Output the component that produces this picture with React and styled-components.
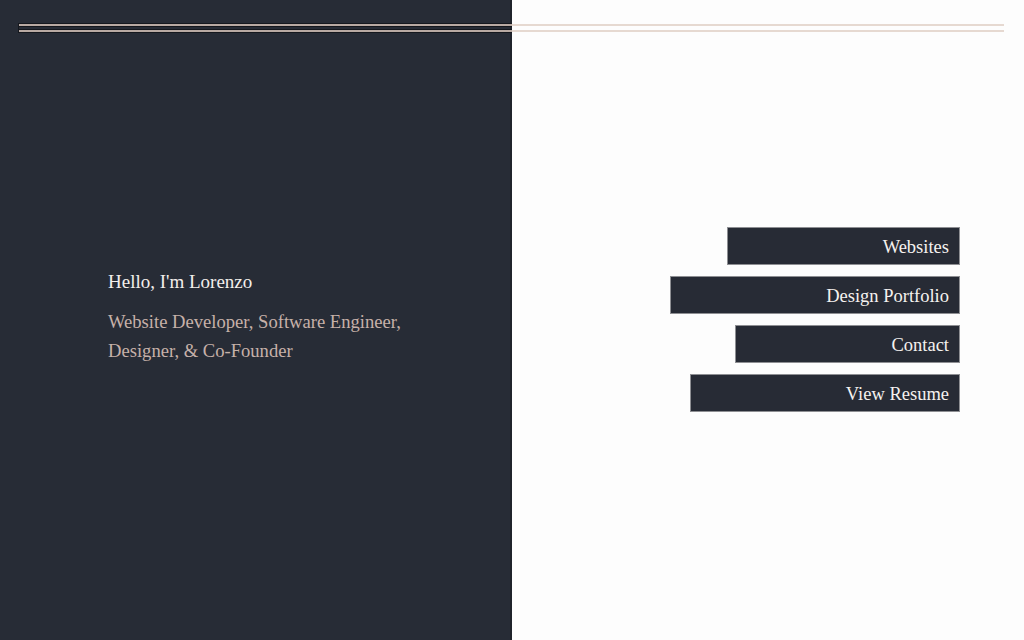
import React from 'react';
import styled, { createGlobalStyle } from 'styled-components';

const GlobalStyle = createGlobalStyle`
  html, body {
    margin: 0;
    padding: 0;
    height: 100%;
  }
  body {
    font-family: "Liberation Serif", "DejaVu Serif", serif;
    background: #fdfdfd;
  }
  #root {
    height: 100%;
  }
`;

function App() {
    const links = ['Websites', 'Design Portfolio', 'Contact', 'View Resume'];

    return (
        <>
            <GlobalStyle />
            <Page>
                <Intro>
                    <Rule side="left" />
                    <IntroBody>
                        <Greeting>Hello, I'm Lorenzo</Greeting>
                        <Roles>
                            Website Developer, Software Engineer,
                            <br />
                            Designer, &amp; Co-Founder
                        </Roles>
                    </IntroBody>
                </Intro>
                <Menu>
                    <Rule side="right" />
                    <MenuBody>
                        {links.map(label => (
                            <MenuButton key={label} href="#">{label}</MenuButton>
                        ))}
                    </MenuBody>
                </Menu>
            </Page>
        </>
    );
}

const Page = styled.div`
  display: grid;
  grid-template-columns: 512px 1fr;
  height: 640px;
  overflow: hidden;
`;

const Intro = styled.section`
  display: flex;
  flex-direction: column;
  background-color: #272c36;
  border-right: 2px solid #1f232b;
  box-sizing: border-box;
  padding-top: 24px;
`;

const Menu = styled.section`
  display: flex;
  flex-direction: column;
  background-color: #fdfdfd;
  padding-top: 24px;
`;

const Rule = styled.div`
  height: 4px;
  border-top: 2px solid ${props => props.side === 'left' ? '#b9aaa3' : '#e6d9d1'};
  border-bottom: 2px solid ${props => props.side === 'left' ? '#b9aaa3' : '#e6d9d1'};
  margin: ${props => props.side === 'left' ? '0 -2px 0 19px' : '0 20px 0 0'};
  box-shadow: ${props => props.side === 'left' ? '0 0 0 1px #15181e, inset 0 1px 0 #15181e, inset 0 -1px 0 #15181e' : 'none'};
  flex-shrink: 0;
`;

const IntroBody = styled.div`
  flex: 1;
  display: flex;
  flex-direction: column;
  justify-content: center;
  padding: 0 0 38px 108px;
`;

const Greeting = styled.h1`
  margin: 0 0 12px;
  font-size: 19px;
  font-weight: 400;
  line-height: 26px;
  color: #f3efec;
`;

const Roles = styled.p`
  margin: 0;
  font-size: 18.6px;
  line-height: 29px;
  color: #c6b1a9;
`;

const MenuBody = styled.nav`
  flex: 1;
  display: flex;
  flex-direction: column;
  align-items: flex-end;
  justify-content: center;
  gap: 11px;
  padding: 0 64px 34px 0;
`;

const MenuButton = styled.a`
  display: flex;
  align-items: center;
  justify-content: flex-end;
  height: 38px;
  box-sizing: border-box;
  padding: 3px 10px 0 155px;
  background-color: #272b35;
  border: 1px solid #8e8f93;
  color: #f5f2ef;
  font-size: 18.5px;
  text-decoration: none;
`;

export default App;
